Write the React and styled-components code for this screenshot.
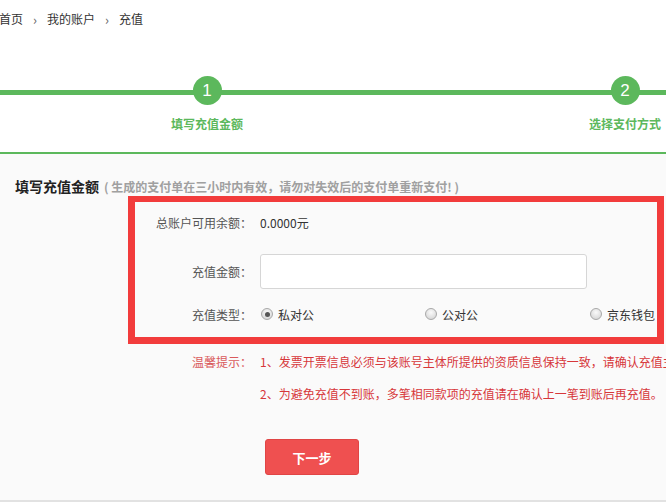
import React, { useState } from 'react'
import styled, { createGlobalStyle } from 'styled-components'

const GlobalStyle = createGlobalStyle`
  html, body {
    margin: 0;
    padding: 0;
    background: #fff;
  }
  body {
    font-family: "Noto Sans CJK SC", "Microsoft YaHei", sans-serif;
    font-size: 12px;
    color: #333;
  }
`

const Page = styled.div`
  width: 666px;
  height: 502px;
  overflow: hidden;
  display: flex;
  flex-direction: column;
`

const Breadcrumb = styled.div`
  display: flex;
  align-items: center;
  height: 38px;
  margin-left: -1px;
  gap: 10px;
  color: #333;
  line-height: 1;
  span.sep {
    color: #666;
    font-size: 13px;
  }
`

const StepBar = styled.div`
  position: relative;
  display: flex;
  padding-top: 38px;
  padding-left: 147px;
  gap: 298px;
  height: 76px;
  border-bottom: 2px solid #5cb85c;
  &::before {
    content: "";
    position: absolute;
    left: 0;
    right: 0;
    top: 52px;
    height: 5px;
    background: #5cb85c;
  }
`

const Step = styled.div`
  position: relative;
  width: 120px;
  flex-shrink: 0;
  display: flex;
  flex-direction: column;
  align-items: center;
  gap: 10px;
`

const Circle = styled.div`
  width: 29px;
  height: 29px;
  border-radius: 50%;
  background: #5cb85c;
  color: #fff;
  font-size: 17px;
  font-family: "Liberation Sans", Arial, sans-serif;
  display: flex;
  align-items: center;
  justify-content: center;
`

const StepLabel = styled.div`
  color: #5cb85c;
  font-weight: bold;
  font-size: 12px;
  white-space: nowrap;
`

const Body = styled.div`
  flex: 1;
  background: #fafafa;
  border-bottom: 2px solid #e2e2e2;
  padding-top: 22px;
`

const Heading = styled.div`
  padding-left: 15px;
  display: flex;
  align-items: baseline;
  gap: 5px;
  white-space: nowrap;
  h3 {
    margin: 0;
    font-size: 14px;
    font-weight: bold;
    color: #222;
  }
  span {
    font-size: 12px;
    font-weight: bold;
    color: #a0a0a0;
  }
`

const FormArea = styled.div`
  margin-left: 128px;
`

const Box = styled.div`
  width: 522px;
  border: 7px solid #f23c3c;
  border-top-width: 6px;
  padding: 5px 0 8px;
  display: flex;
  flex-direction: column;
`

const Row = styled.div`
  display: flex;
  align-items: center;
  height: ${p => p.h || 30}px;
  margin-bottom: ${p => p.mb || 0}px;
  white-space: nowrap;
`

const Label = styled.div`
  width: 117px;
  text-align: right;
  color: ${p => p.tone || '#555'};
  padding-right: 8px;
  flex-shrink: 0;
`

const Value = styled.div`
  color: #333;
`

const AmountInput = styled.input`
  width: 327px;
  height: 35px;
  box-sizing: border-box;
  border: 1px solid #d6d6d6;
  border-radius: 3px;
  background: #fff;
  outline: none;
  padding: 0 8px;
  font-family: inherit;
`

const Radios = styled.div`
  display: flex;
  align-items: center;
  margin-left: 1px;
`

const RadioItem = styled.label`
  display: flex;
  align-items: center;
  gap: 5px;
  width: ${p => p.w}px;
  color: #333;
  cursor: pointer;
`

const Dot = styled.span`
  width: 12px;
  height: 12px;
  border-radius: 50%;
  box-sizing: border-box;
  border: 1px solid #a8a8a8;
  background: radial-gradient(circle at 50% 35%, #fafafa, #d0d0d0);
  display: flex;
  align-items: center;
  justify-content: center;
  &::after {
    content: "";
    width: 5px;
    height: 5px;
    border-radius: 50%;
    background: ${p => (p.on ? '#555' : 'transparent')};
  }
`

const Tips = styled.div`
  padding-left: 7px;
  padding-top: 2px;
`

const TipText = styled.div`
  color: #d7373a;
`

const Next = styled.button`
  margin: 31px 0 0 137px;
  width: 94px;
  height: 36px;
  border: 1px solid #e04545;
  border-radius: 3px;
  background: #ef5050;
  color: #fff;
  font-weight: bold;
  font-size: 13px;
  font-family: inherit;
  cursor: pointer;
`

const types = [
  { key: 'private', label: '私对公', w: 164 },
  { key: 'public', label: '公对公', w: 165 },
  { key: 'jd', label: '京东钱包', w: 80 },
]

export default function App() {
  const [type, setType] = useState('private')
  const [amount, setAmount] = useState('')

  return (
    <Page>
      <GlobalStyle />
      <Breadcrumb>
        <span>首页</span>
        <span className="sep">›</span>
        <span>我的账户</span>
        <span className="sep">›</span>
        <span>充值</span>
      </Breadcrumb>

      <StepBar>
        <Step>
          <Circle>1</Circle>
          <StepLabel>填写充值金额</StepLabel>
        </Step>
        <Step>
          <Circle>2</Circle>
          <StepLabel>选择支付方式</StepLabel>
        </Step>
      </StepBar>

      <Body>
        <Heading>
          <h3>填写充值金额</h3>
          <span>( 生成的支付单在三小时内有效，请勿对失效后的支付单重新支付! )</span>
        </Heading>

        <FormArea>
          <Box>
            <Row h={30} mb={16}>
              <Label>总账户可用余额：</Label>
              <Value>0.0000元</Value>
            </Row>
            <Row h={36} mb={10}>
              <Label>充值金额：</Label>
              <AmountInput value={amount} onChange={e => setAmount(e.target.value)} />
            </Row>
            <Row h={30}>
              <Label>充值类型：</Label>
              <Radios>
                {types.map(t => (
                  <RadioItem key={t.key} w={t.w} onClick={() => setType(t.key)}>
                    <Dot on={type === t.key ? 1 : 0} />
                    {t.label}
                  </RadioItem>
                ))}
              </Radios>
            </Row>
          </Box>

          <Tips>
            <Row h={30} mb={2}>
              <Label tone="#d9595b">温馨提示：</Label>
              <TipText>1、发票开票信息必须与该账号主体所提供的资质信息保持一致，请确认充值主体</TipText>
            </Row>
            <Row h={30}>
              <Label />
              <TipText>2、为避免充值不到账，多笔相同款项的充值请在确认上一笔到账后再充值。</TipText>
            </Row>
          </Tips>

          <Next>下一步</Next>
        </FormArea>
      </Body>
    </Page>
  )
}
